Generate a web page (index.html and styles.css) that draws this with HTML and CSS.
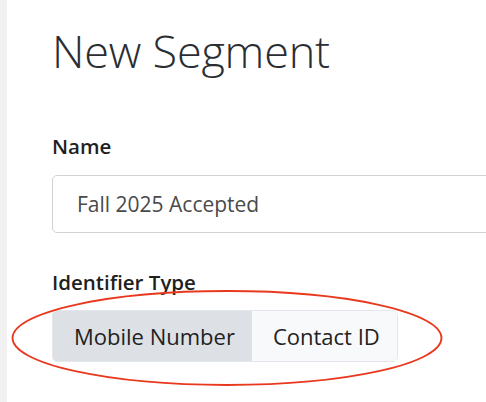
FILE: index.html
```html
<!DOCTYPE html>
<html>
<head>
<meta charset="utf-8">
<link rel="stylesheet" href="styles.css">
</head>
<body>
<div class="page">
  <div class="rail"></div>
  <main class="main">
    <h1 class="title">New Segment</h1>
    <div class="field field-name">
      <label class="label">Name</label>
      <div class="input">Fall 2025 Accepted</div>
    </div>
    <div class="field field-id">
      <label class="label">Identifier Type</label>
      <div class="seg-wrap">
        <div class="segmented">
          <div class="seg seg-active">Mobile Number</div>
          <div class="seg">Contact ID</div>
        </div>
        <svg class="annotation" width="440" height="104" viewBox="0 0 440 104">
          <ellipse cx="217" cy="52" rx="214.5" ry="47" fill="none" stroke="#e8391f" stroke-width="1.8"/>
        </svg>
      </div>
    </div>
  </main>
</div>
</body>
</html>
```
FILE: styles.css
```css
html, body {
  margin: 0;
  padding: 0;
  background: #ffffff;
  overflow: hidden;
}
body {
  font-family: "Open Sans", "Noto Sans", sans-serif;
  color: #222;
}
.page {
  display: flex;
  width: 486px;
  height: 402px;
  overflow: hidden;
}
.rail {
  flex: 0 0 7px;
  background: #f1f1f1;
}
.main {
  flex: 1;
  padding-left: 45px;
  min-width: 0;
}
.title {
  margin: 20px 0 0 0;
  font-size: 45px;
  font-weight: 300;
  line-height: 62px;
  color: #2a2e33;
  letter-spacing: -0.2px;
}
.label {
  display: block;
  font-size: 20.5px;
  font-weight: 600;
  color: #1f1f1f;
  line-height: 24px;
}
.field-name {
  margin-top: 52px;
}
.input {
  margin-top: 17px;
  width: 480px;
  height: 58px;
  box-sizing: border-box;
  border: 1px solid #d2d2d2;
  border-radius: 5px;
  padding-left: 24px;
  display: flex;
  align-items: center;
  font-size: 21px;
  color: #4a4a4a;
}
.field-id {
  margin-top: 37px;
}
.seg-wrap {
  position: relative;
  margin-top: 16px;
}
.segmented {
  display: inline-flex;
  vertical-align: top;
  height: 52px;
  border: 1px solid #e3e6ea;
  border-radius: 5px;
  overflow: hidden;
  box-sizing: border-box;
}
.seg {
  display: flex;
  align-items: center;
  padding: 0 17px 0 21px;
  font-size: 22px;
  color: #222;
  background: #f8f9fa;
}
.seg-active {
  background: #dde1e6;
}
.annotation {
  position: absolute;
  left: -42px;
  top: -24px;
  overflow: visible;
}
```
